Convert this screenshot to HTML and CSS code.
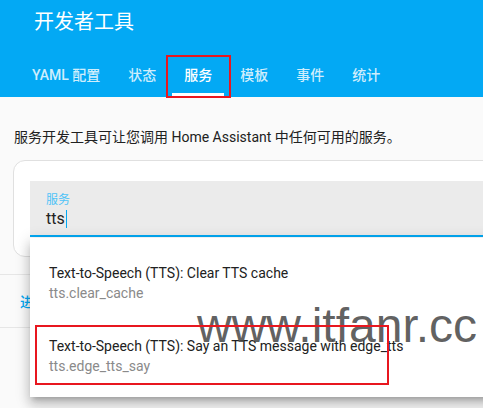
FILE: index.html
```html
<!DOCTYPE html>
<html lang="zh">
<head>
<meta charset="utf-8">
<link rel="stylesheet" href="styles.css">
</head>
<body>
<div class="page">
  <header class="header">
    <div class="toolbar">开发者工具</div>
    <nav class="tabs">
      <div class="tab">YAML 配置</div>
      <div class="tab">状态</div>
      <div class="tab active">服务<span class="mark mark-tab"></span></div>
      <div class="tab">模板</div>
      <div class="tab">事件</div>
      <div class="tab">统计</div>
    </nav>
  </header>
  <main class="content">
    <p class="desc">服务开发工具可让您调用 Home Assistant 中任何可用的服务。</p>
    <div class="card">
      <div class="field">
        <div class="field-label">服务</div>
        <div class="field-input">tts<span class="caret"></span></div>
      </div>
    </div>
    <div class="actions"><span class="action-btn">进入 YAML 模式</span></div>
  </main>
  <div class="dropdown">
    <div class="item">
      <div class="primary">Text-to-Speech (TTS): Clear TTS cache</div>
      <div class="secondary">tts.clear_cache</div>
    </div>
    <div class="item">
      <div class="primary">Text-to-Speech (TTS): Say an TTS message with edge_tts</div>
      <div class="secondary">tts.edge_tts_say</div>
    </div>
  </div>
  <div class="watermark">www.itfanr.cc</div>
  <div class="mark mark-item"></div>
</div>
</body>
</html>
```
FILE: styles.css
```css
* { box-sizing: border-box; }
html, body {
  margin: 0;
  padding: 0;
}
body {
  background: #fafafa;
  font-family: Roboto, "Noto Sans CJK SC", sans-serif;
  color: #212121;
}
.page {
  position: relative;
  width: 483px;
  height: 408px;
  overflow: hidden;
}
.header {
  background: #03a9f4;
  height: 97px;
  color: #fff;
}
.toolbar {
  height: 56px;
  padding: 8px 0 0 34px;
  font-size: 20px;
  line-height: 28px;
  font-weight: 400;
}
.tabs {
  display: flex;
  padding-left: 18px;
  height: 41px;
}
.tab {
  position: relative;
  display: flex;
  align-items: center;
  padding: 0 14px 6px;
  font-size: 14px;
  font-weight: 500;
  color: rgba(255, 255, 255, 0.82);
}
.tab.active {
  color: #fff;
}
.tab.active::after {
  content: "";
  position: absolute;
  left: 2px;
  right: 2px;
  bottom: 1px;
  height: 3px;
  background: #fff;
}
.mark {
  position: absolute;
  border: 2px solid #e8171f;
}
.mark-tab {
  left: -4px;
  right: -5px;
  top: -1px;
  bottom: -1px;
}
.content {
  padding-top: 30px;
}
.desc {
  margin: 0 0 13px 14px;
  font-size: 14px;
  line-height: 20px;
  color: #212121;
}
.card {
  margin-left: 13px;
  width: 490px;
  height: 97px;
  background: #fff;
  border: 1px solid #e0e0e0;
  border-radius: 12px;
  padding: 20px 0 0 16px;
}
.field {
  height: 56px;
  background: #ebebeb;
  border-bottom: 2px solid #03a9f4;
  padding: 12px 0 0 16px;
}
.field-label {
  font-size: 12px;
  line-height: 15px;
  color: #4fc3f7;
}
.field-input {
  font-size: 16px;
  line-height: 21px;
  color: #212121;
  display: flex;
  align-items: center;
}
.caret {
  display: inline-block;
  width: 1px;
  height: 18px;
  background: #03a9f4;
  margin-left: 1px;
}
.actions {
  margin-top: 17px;
  height: 54px;
  border-top: 1px solid #e6e6e6;
  border-bottom: 1px solid #e6e6e6;
  display: flex;
  align-items: center;
  padding-left: 20px;
}
.action-btn {
  font-size: 14px;
  font-weight: 500;
  color: #03a9f4;
}
.dropdown {
  position: absolute;
  left: 30px;
  top: 238px;
  width: 470px;
  height: 159px;
  background: #fff;
  padding-top: 8px;
  box-shadow: 0 5px 5px -3px rgba(0,0,0,0.2), 0 8px 10px 1px rgba(0,0,0,0.14), 0 3px 14px 2px rgba(0,0,0,0.12);
}
.item {
  height: 73px;
  padding: 17px 0 0 19px;
}
.primary {
  font-size: 14px;
  line-height: 20px;
  color: #212121;
}
.secondary {
  font-size: 14px;
  line-height: 20px;
  color: #8a8a8a;
}
.watermark {
  position: absolute;
  left: 197px;
  top: 302px;
  font-family: "Liberation Sans", Arial, sans-serif;
  font-size: 48px;
  line-height: 48px;
  color: rgba(70, 70, 70, 0.85);
}
.mark-item {
  left: 35px;
  top: 325px;
  width: 354px;
  height: 60px;
}
```
